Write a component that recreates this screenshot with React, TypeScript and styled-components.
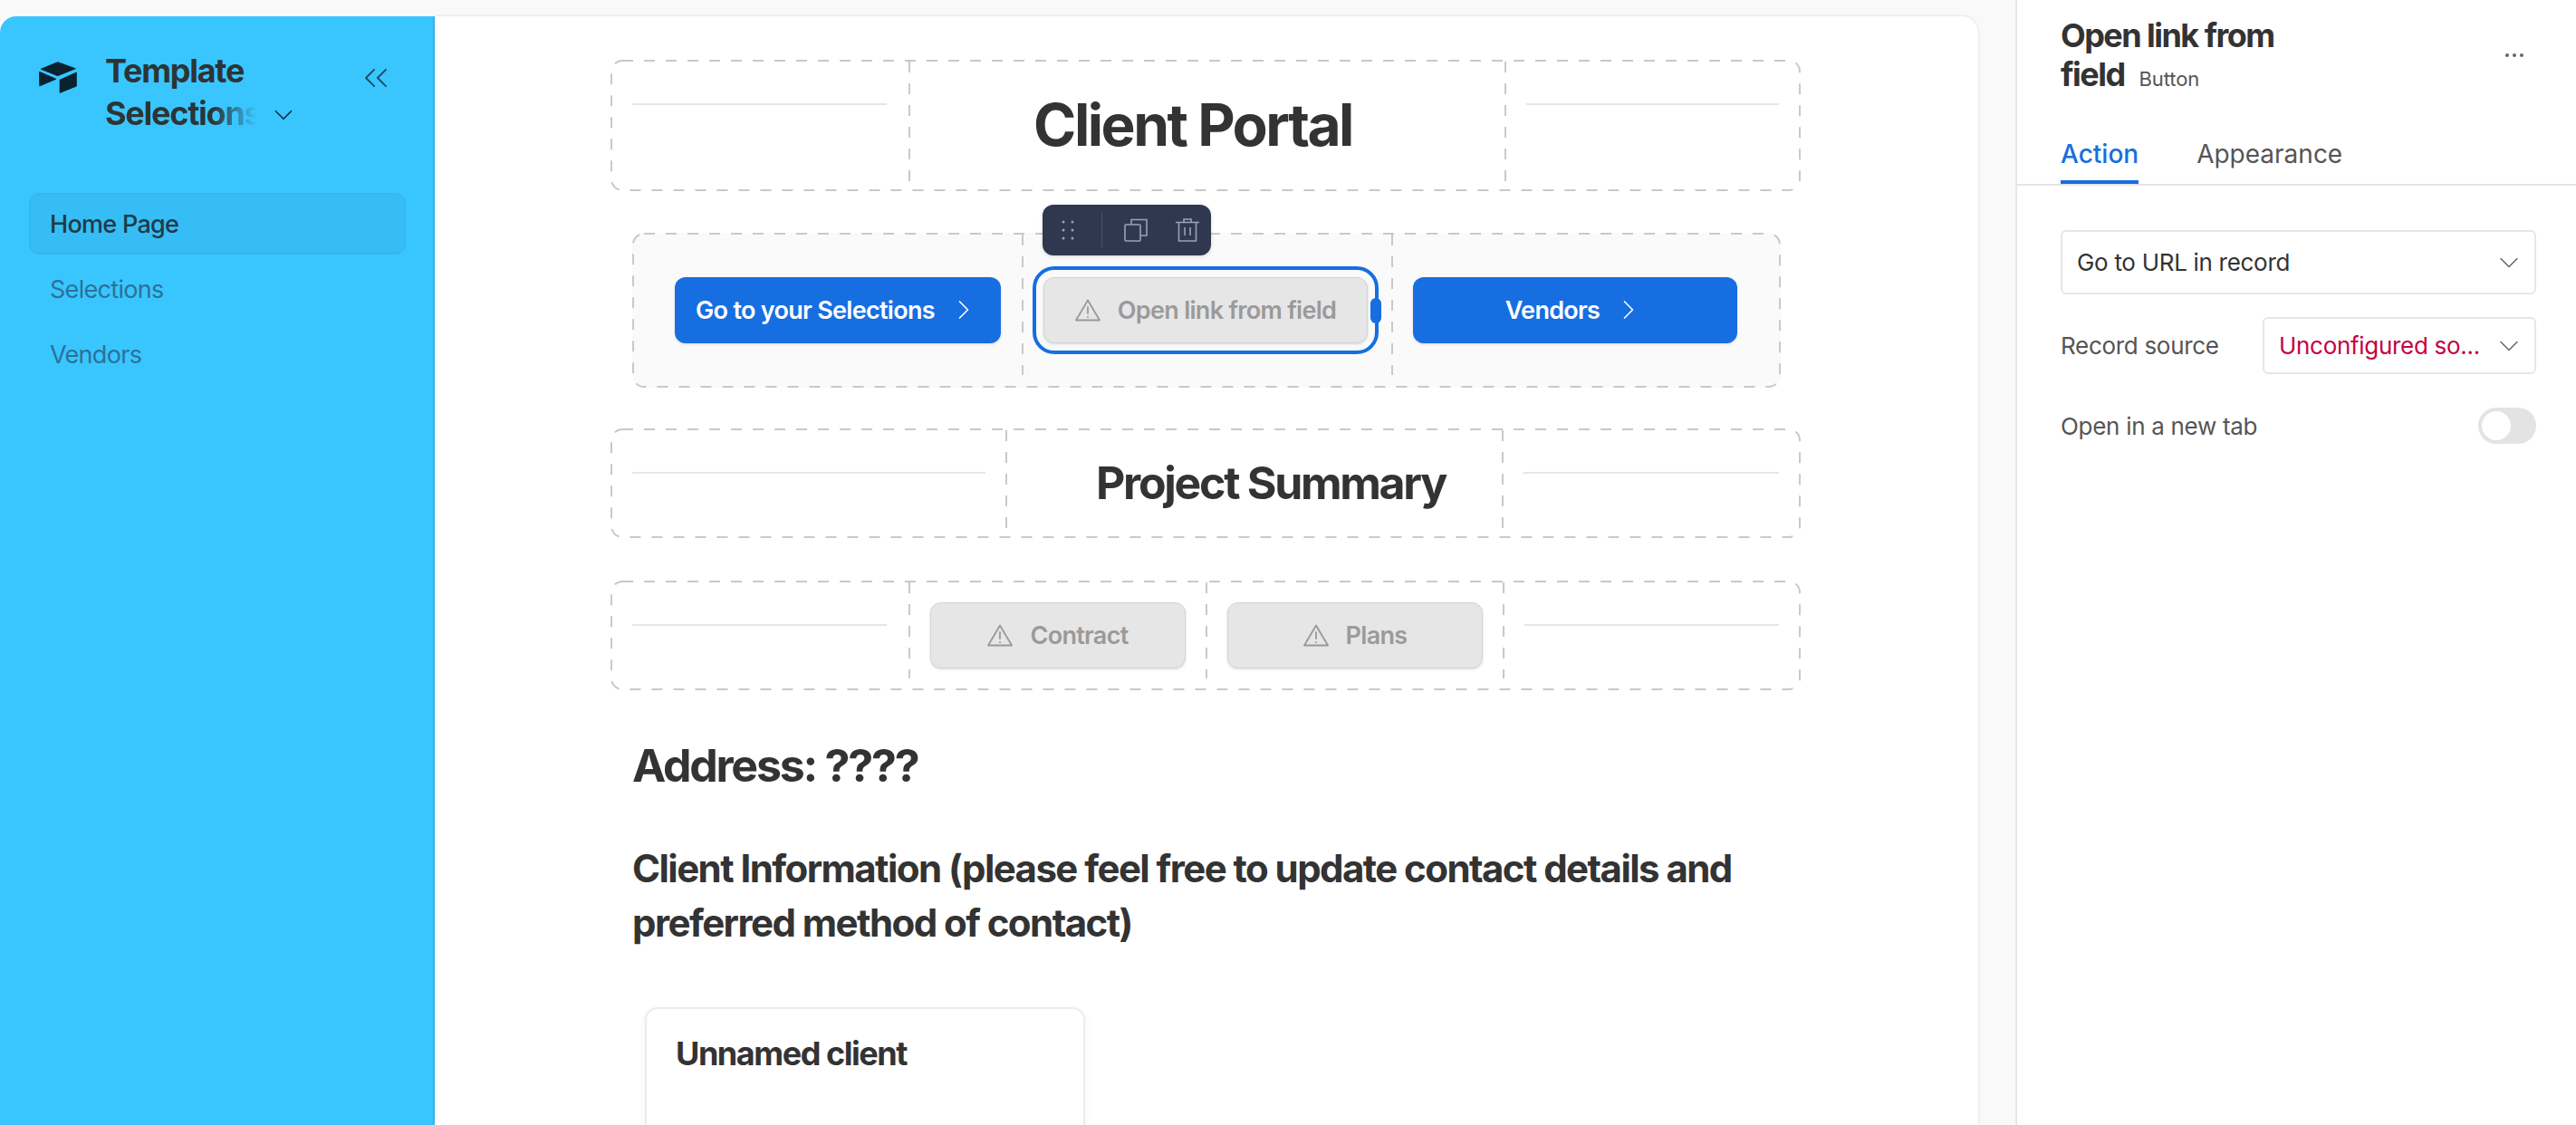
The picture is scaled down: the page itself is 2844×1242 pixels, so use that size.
import { createGlobalStyle, styled } from 'styled-components';
import { ChevronDown, ChevronRight, ChevronsLeft } from 'lucide-react';

const GlobalStyle = createGlobalStyle`
  html, body {
    margin: 0;
    height: 100%;
    overflow: hidden;
    background: #f9f9f9;
    font-family: Inter, "Noto Sans", sans-serif;
    color: #333;
  }
`;

const Page = styled.div`
  display: flex;
  height: 1242px;
  padding-top: 18px;
  box-sizing: border-box;
`;

const Sidebar = styled.aside`
  width: 480px;
  flex-shrink: 0;
  background: #39c6ff;
  border-top-left-radius: 18px;
  box-shadow: inset -2px 0 2px rgba(0, 0, 0, 0.06);
  padding: 37px 32px 0;
  box-sizing: border-box;
`;

const Brand = styled.div`
  display: flex;
  align-items: flex-start;
  height: 158px;
`;

const Logo = styled.svg`
  width: 42px;
  height: 35px;
  margin: 13px 0 0 11px;
  flex-shrink: 0;
`;

const BrandName = styled.div`
  width: 220px;
  margin-left: 31px;
  flex-shrink: 0;
  font-size: 36px;
  line-height: 47px;
  font-weight: 650;
  letter-spacing: -1.25px;
  color: #2d3436;
`;

const Fade = styled.span`
  background: linear-gradient(90deg, #2d3436 72%, rgba(45, 52, 54, 0) 100%);
  -webkit-background-clip: text;
  background-clip: text;
  color: transparent;
  display: inline-block;
  width: 167px;
  overflow: hidden;
  white-space: nowrap;
  vertical-align: top;
`;

const BrandChevron = styled(ChevronDown)`
  margin: 8px 0 0 13px;
  vertical-align: top;
  color: #11303f;
`;

const CollapseIcon = styled(ChevronsLeft)`
  margin: 9px 0 0 57px;
  flex-shrink: 0;
  color: #1c4a60;
`;

const NavList = styled.nav`
  display: flex;
  flex-direction: column;
  gap: 4px;
`;

const NavItem = styled.div<{ $active?: boolean }>`
  height: 68px;
  display: flex;
  align-items: center;
  padding-left: 21px;
  box-sizing: border-box;
  font-size: 27px;
  letter-spacing: -0.7px;
  font-weight: ${(p) => (p.$active ? 500 : 400)};
  border-radius: 12px;
  color: ${(p) => (p.$active ? '#1f3a48' : '#2a7299')};
  background: ${(p) => (p.$active ? '#36bdf5' : 'transparent')};
  border: 2px solid ${(p) => (p.$active ? '#34b8ee' : 'transparent')};
`;

const Gutter = styled.div`
  width: 41px;
  flex-shrink: 0;
`;

const Canvas = styled.main`
  width: 1704px;
  flex-shrink: 0;
  background: #fff;
  border-top-right-radius: 18px;
  box-shadow: 0 0 3px rgba(0, 0, 0, 0.16);
  overflow: hidden;
  padding: 48px 0 0 194px;
  box-sizing: border-box;
`;

const Content = styled.div`
  width: 1314px;
  display: flex;
  flex-direction: column;
`;

const Row = styled.div<{ $height: number; $inset?: boolean; $top: number; $cols: string }>`
  position: relative;
  height: ${(p) => p.$height}px;
  margin: ${(p) => p.$top}px ${(p) => (p.$inset ? '22px' : 0)} 0 ${(p) => (p.$inset ? '24px' : 0)};
  padding: 2px;
  display: grid;
  grid-template-columns: ${(p) => p.$cols};
  align-items: start;
  box-sizing: border-box;
  border-radius: 14px;
  background: ${(p) => (p.$inset ? '#fafafa' : 'transparent')};
`;

/* CSS dashed borders can't do the 12/12 dash, so the frame is drawn over the row */
const DashFrame = styled.svg`
  position: absolute;
  inset: 0;
  width: 100%;
  height: 100%;
  pointer-events: none;
`;

const DashRect = styled.rect`
  x: 1px;
  y: 1px;
  width: calc(100% - 2px);
  height: calc(100% - 2px);
  rx: 12px;
  fill: none;
  stroke: #c9c9c9;
  stroke-width: 2px;
  stroke-dasharray: 12 12;
`;

const Cell = styled.div<{ $height: number; $last?: boolean; $pad?: string }>`
  height: ${(p) => p.$height}px;
  box-sizing: border-box;
  padding: ${(p) => p.$pad ?? (p.$last ? '0 22px' : '0 26px 0 22px')};
  display: flex;
  align-items: center;
  justify-content: center;
  background: ${(p) =>
    p.$last ? 'none' : 'repeating-linear-gradient(#c9c9c9 0 12px, transparent 12px 24px) right top / 2px 100% no-repeat'};
`;

const Rule = styled.hr<{ $top: number }>`
  width: 100%;
  height: 2px;
  border: none;
  background: #e6e6e6;
  align-self: flex-start;
  margin: ${(p) => p.$top}px 0 0;
`;

const Heading = styled.h1<{ $size: number; $spacing: number }>`
  margin: 0;
  font-size: ${(p) => p.$size}px;
  letter-spacing: ${(p) => p.$spacing}px;
  font-weight: 650;
  line-height: 1.2;
  white-space: nowrap;
  color: #333;
`;

const ActionButton = styled.button<{ $disabled?: boolean }>`
  width: 100%;
  height: 73px;
  display: flex;
  align-items: center;
  justify-content: center;
  gap: ${(p) => (p.$disabled ? 19 : 14)}px;
  position: relative;
  padding: 0;
  border-radius: 12px;
  box-sizing: border-box;
  font-family: inherit;
  font-size: 27px;
  letter-spacing: -0.7px;
  font-weight: 600;
  white-space: nowrap;
  color: ${(p) => (p.$disabled ? '#9a9a9a' : '#fff')};
  background: ${(p) => (p.$disabled ? '#e6e6e6' : '#166ee1')};
  border: ${(p) => (p.$disabled ? '1px solid #d4d4d4' : 'none')};
  box-shadow: 0 1px 3px rgba(0, 0, 0, 0.14);
`;

const SelectedButton = styled(ActionButton)`
  outline: 4px solid #166ee1;
  outline-offset: 8px;
`;

const Handle = styled.span`
  position: absolute;
  right: -16px;
  top: 22px;
  width: 12px;
  height: 28px;
  border-radius: 6px;
  background: #166ee1;
`;

const Toolbar = styled.div`
  position: absolute;
  left: -2px;
  top: -81px;
  width: 186px;
  height: 56px;
  display: flex;
  align-items: center;
  border-radius: 12px;
  background: #303850;
  box-shadow: 0 1px 4px rgba(0, 0, 0, 0.15);
`;

const Grip = styled.svg`
  width: 14px;
  height: 22px;
  margin-left: 21px;
  flex-shrink: 0;
`;

const ToolDivider = styled.span`
  width: 1px;
  height: 39px;
  margin: 0 24px 0 30px;
  flex-shrink: 0;
  background: #4a5268;
`;

const ToolIcon = styled.svg`
  width: 26px;
  height: 26px;
  margin-right: 31px;
  flex-shrink: 0;

  &:last-child {
    margin-right: 0;
  }
`;

const Address = styled.h2`
  margin: 55px 0 0 24px;
  font-size: 50px;
  letter-spacing: -2.25px;
  line-height: 56px;
  font-weight: 650;
  color: #333;
`;

const ClientHeading = styled.h3`
  margin: 56px 0 0 24px;
  font-size: 42px;
  letter-spacing: -1.56px;
  line-height: 60px;
  font-weight: 650;
  color: #333;
`;

const ClientCard = styled.section`
  width: 486px;
  height: 300px;
  margin: 63px 0 0 38px;
  box-sizing: border-box;
  padding: 26px 32px;
  border: 2px solid #ececec;
  border-radius: 14px;
  box-shadow: 0 2px 10px rgba(0, 0, 0, 0.05);
  font-size: 36px;
  letter-spacing: -1.45px;
  line-height: 46px;
  font-weight: 650;
  color: #333;
`;

const Panel = styled.aside`
  flex: 1;
  margin-top: -18px;
  background: #fff;
  border-left: 2px solid #e6e6e6;
`;

const PanelHeader = styled.div`
  display: flex;
  justify-content: space-between;
  padding: 18px 44px 0 48px;
  height: 139px;
  box-sizing: border-box;
`;

const PanelTitle = styled.div`
  width: 260px;
  font-size: 36px;
  letter-spacing: -1.55px;
  line-height: 43px;
  font-weight: 650;
  color: #333;
`;

const TypeTag = styled.span`
  margin-left: 16px;
  font-size: 22px;
  letter-spacing: -0.1px;
  font-weight: 400;
  color: #555;
`;

const Dots = styled.span`
  margin: 41px 14px 0 0;
  display: flex;
  gap: 4px;
  height: 4px;

  i {
    width: 4px;
    height: 4px;
    border-radius: 50%;
    background: #666;
  }
`;

const Tabs = styled.div`
  display: flex;
  gap: 64px;
  height: 64px;
  padding-left: 48px;
  border-bottom: 2px solid #e4e4e4;
`;

const Tab = styled.div<{ $active?: boolean }>`
  height: 64px;
  box-sizing: border-box;
  padding-top: 11px;
  font-size: 28px;
  line-height: 40px;
  font-weight: ${(p) => (p.$active ? 500 : 400)};
  color: ${(p) => (p.$active ? '#166ee1' : '#555')};
  border-bottom: ${(p) => (p.$active ? '4px solid #166ee1' : 'none')};
`;

const PanelBody = styled.div`
  padding: 49px 44px 0 48px;
  display: flex;
  flex-direction: column;
`;

const SelectBox = styled.div<{ $height: number; $width?: number; $danger?: boolean }>`
  height: ${(p) => p.$height}px;
  width: ${(p) => (p.$width ? `${p.$width}px` : '100%')};
  box-sizing: border-box;
  display: flex;
  align-items: center;
  justify-content: space-between;
  padding: 0 10px 0 16px;
  border: 2px solid #e6e6e6;
  border-radius: 6px;
  font-size: 26px;
  letter-spacing: -0.3px;
  color: ${(p) => (p.$danger ? '#c4043f' : '#333')};
  white-space: nowrap;
`;

const FieldRow = styled.div<{ $top: number }>`
  display: flex;
  align-items: center;
  justify-content: space-between;
  margin-top: ${(p) => p.$top}px;
  font-size: 26px;
  letter-spacing: -0.3px;
  color: #555;
`;

const Toggle = styled.span`
  width: 64px;
  height: 40px;
  padding: 4px;
  box-sizing: border-box;
  border-radius: 20px;
  background: #e3e3e3;

  &::before {
    content: '';
    display: block;
    width: 32px;
    height: 32px;
    border-radius: 50%;
    background: #fff;
  }
`;

const AirtableLogo = () => (
  <Logo viewBox="0 0 42 35" fill="#0a2230" stroke="#0a2230" strokeWidth="1.2" strokeLinejoin="round">
    <path d="M20.700 0.800 40 7.700 20.700 15.500 2.500 8.300Z" />
    <path d="M0.700 11.500 18.500 19.300 0.900 26.700Z" />
    <path d="M23.300 20.300 41.200 12.200V27L23.300 34.200Z" />
  </Logo>
);

const WarningIcon = () => (
  <svg width="28" height="25" viewBox="0 0 28 25" fill="none" stroke="#999" strokeWidth="1.8" strokeLinejoin="round" strokeLinecap="round">
    <path d="M14 1.500 27 23.500H1Z" />
    <path d="M14 9v7M14 20v.2" />
  </svg>
);

const Frame = () => (
  <DashFrame>
    <DashRect />
  </DashFrame>
);

const chevronRight = <ChevronRight size={36} strokeWidth={1.1} />;
const chevronDown = <ChevronDown size={36} strokeWidth={1} color="#666" />;

export default function App() {
  return (
    <>
      <GlobalStyle />
      <Page>
        <Sidebar>
          <Brand>
            <AirtableLogo />
            <BrandName>
              Template <Fade>Selections</Fade>
              <BrandChevron size={34} strokeWidth={1.2} />
            </BrandName>
            <CollapseIcon size={44} strokeWidth={1} />
          </Brand>
          <NavList>
            <NavItem $active>Home Page</NavItem>
            <NavItem>Selections</NavItem>
            <NavItem>Vendors</NavItem>
          </NavList>
        </Sidebar>
        <Canvas>
          <Content>
            <Row $height={145} $top={0} $cols="329px 658px 1fr">
              <Frame />
              <Cell $height={132}><Rule $top={46} /></Cell>
              <Cell $height={132} $pad="8px 34px 0 0"><Heading $size={64} $spacing={-2.5}>Client Portal</Heading></Cell>
              <Cell $height={132} $last><Rule $top={46} /></Cell>
            </Row>
            <Row $height={171} $top={46} $inset $cols="430px 408px 1fr">
              <Frame />
              <Cell $height={155} $pad="11px 25px 0 45px"><ActionButton>Go to your Selections {chevronRight}</ActionButton></Cell>
              <Cell $height={155} $pad="11px 28px 0 22px">
                <SelectedButton $disabled>
                  <WarningIcon />
                  Open link from field
                  <Handle />
                  <Toolbar>
                    <Grip viewBox="0 0 14 22" fill="#9aa1b2">
                      <circle cx="2" cy="2" r="1.5" /><circle cx="12" cy="2" r="1.5" />
                      <circle cx="2" cy="11" r="1.5" /><circle cx="12" cy="11" r="1.5" />
                      <circle cx="2" cy="20" r="1.5" /><circle cx="12" cy="20" r="1.5" />
                    </Grip>
                    <ToolDivider />
                    <ToolIcon viewBox="0 0 26 26" fill="none" stroke="#9aa1b2" strokeWidth="1.6">
                      <rect x="1" y="7" width="17" height="18" rx="1" />
                      <path d="M8 7V1.500h17V19h-7" />
                    </ToolIcon>
                    <ToolIcon viewBox="0 0 26 26" fill="none" stroke="#9aa1b2" strokeWidth="1.6">
                      <path d="M0 4.500h26M9 4.500V1h8v3.500M3.500 4.500V25h19V4.500M10 10v9M16 10v9" />
                    </ToolIcon>
                  </Toolbar>
                </SelectedButton>
              </Cell>
              <Cell $height={155} $last $pad="11px 46px 0 22px"><ActionButton>Vendors {chevronRight}</ActionButton></Cell>
            </Row>
            <Row $height={121} $top={45} $cols="436px 548px 1fr">
              <Frame />
              <Cell $height={109} $pad="0 24px 0 22px"><Rule $top={46} /></Cell>
              <Cell $height={109} $pad="6px 0 0 34px"><Heading $size={50} $spacing={-2.3}>Project Summary</Heading></Cell>
              <Cell $height={109} $last><Rule $top={46} /></Cell>
            </Row>
            <Row $height={121} $top={47} $cols="329px 328px 328px 1fr">
              <Frame />
              <Cell $height={106}><Rule $top={46} /></Cell>
              <Cell $height={106} $pad="11px 24px 0 22px"><ActionButton $disabled><WarningIcon />Contract</ActionButton></Cell>
              <Cell $height={106} $pad="11px 24px 0 22px"><ActionButton $disabled><WarningIcon />Plans</ActionButton></Cell>
              <Cell $height={106} $last><Rule $top={46} /></Cell>
            </Row>
            <Address>Address: ????</Address>
            <ClientHeading>Client Information (please feel free to update contact details and preferred method of contact)</ClientHeading>
            <ClientCard>Unnamed client</ClientCard>
          </Content>
        </Canvas>
        <Gutter />
        <Panel>
          <PanelHeader>
            <PanelTitle>Open link from field<TypeTag>Button</TypeTag></PanelTitle>
            <Dots><i /><i /><i /></Dots>
          </PanelHeader>
          <Tabs>
            <Tab $active>Action</Tab>
            <Tab>Appearance</Tab>
          </Tabs>
          <PanelBody>
            <SelectBox $height={71}>Go to URL in record {chevronDown}</SelectBox>
            <FieldRow $top={25}>
              Record source
              <SelectBox $height={63} $width={302} $danger>Unconfigured so... {chevronDown}</SelectBox>
            </FieldRow>
            <FieldRow $top={37}>
              Open in a new tab
              <Toggle />
            </FieldRow>
          </PanelBody>
        </Panel>
      </Page>
    </>
  );
}
